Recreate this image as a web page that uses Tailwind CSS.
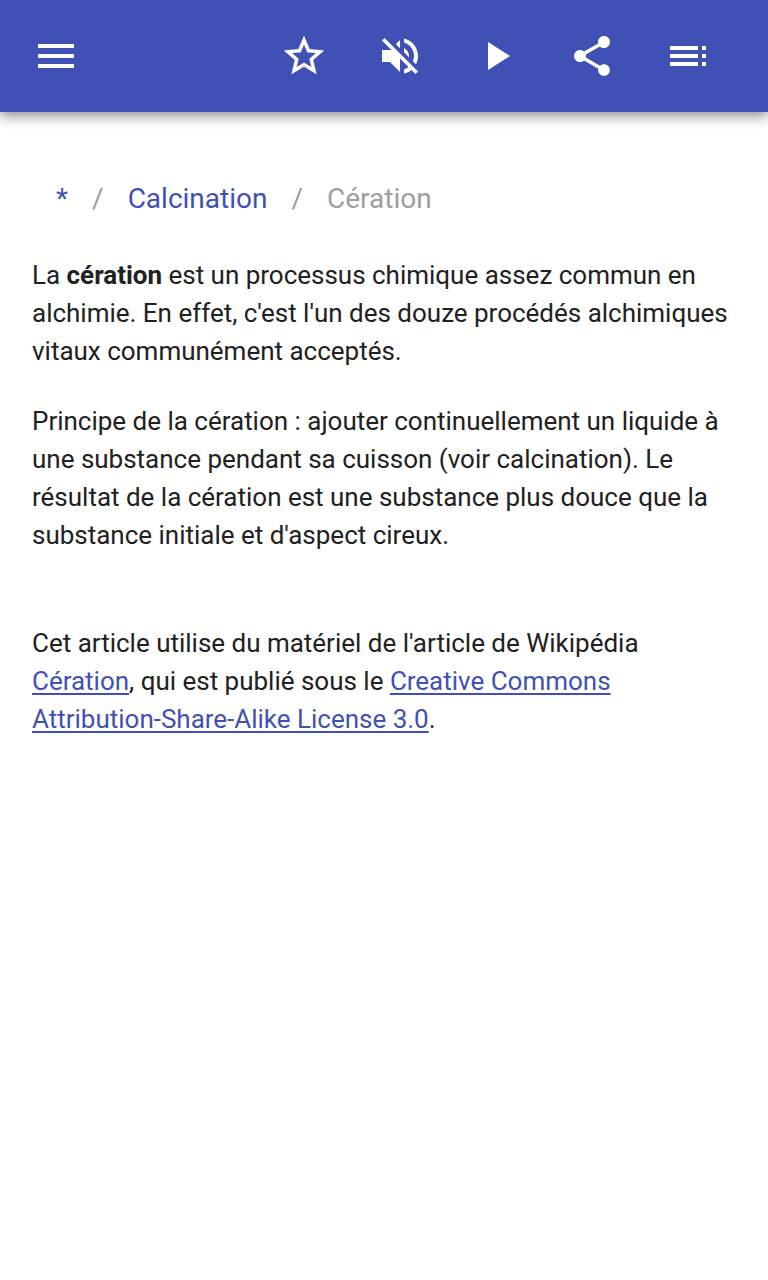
<!DOCTYPE html>
<html lang="fr">
<head>
  <meta charset="utf-8">
  <meta name="viewport" content="width=device-width, initial-scale=1">
  <title>Cération</title>
  <script src="https://cdn.jsdelivr.net/npm/@tailwindcss/browser@4"></script>
</head>
<body class="min-h-screen bg-white font-['Roboto',sans-serif] text-[26px] leading-[38px] tracking-[-0.01px] text-[#212121] antialiased">

  <!-- app bar -->
  <header class="flex h-28 items-center justify-between bg-[#3f51b5] pl-8 pr-14 text-white shadow-[0_4px_12px_rgba(0,0,0,0.45)]">
    <button aria-label="Menu">
      <svg class="size-12" viewBox="0 0 24 24" fill="currentColor"><path d="M3 18h18v-2H3v2zm0-5h18v-2H3v2zm0-7v2h18V6H3z"/></svg>
    </button>
    <div class="flex gap-12">
      <button aria-label="Favori">
        <svg class="size-12" viewBox="0 0 24 24" fill="currentColor" stroke="currentColor" stroke-width=".15"><path d="M22 9.24l-7.19-.62L12 2 9.19 8.63 2 9.24l5.46 4.73L5.82 21 12 17.27 18.18 21l-1.63-7.03L22 9.24zM12 15.4l-3.76 2.27 1-4.28-3.32-2.88 4.38-.38L12 6.1l1.71 4.04 4.38.38-3.32 2.88 1 4.28L12 15.4z"/></svg>
      </button>
      <button aria-label="Son">
        <svg class="size-12" viewBox="0 0 24 24" fill="currentColor"><path d="M16.5 12c0-1.77-1.02-3.29-2.5-4.03v2.21l2.45 2.45c.03-.2.05-.41.05-.63zm2.5 0c0 .94-.2 1.82-.54 2.64l1.51 1.51C20.63 14.91 21 13.5 21 12c0-4.28-2.99-7.86-7-8.77v2.06c2.89.86 5 3.54 5 6.71zM4.27 3L3 4.27 7.73 9H3v6h4l5 5v-6.73l4.25 4.25c-.67.52-1.42.93-2.25 1.18v2.06c1.38-.31 2.63-.95 3.69-1.81L19.73 21 21 19.73l-9-9L4.27 3zM12 4L9.91 6.09 12 8.18V4z"/></svg>
      </button>
      <button aria-label="Lecture">
        <svg class="size-12" viewBox="0 0 24 24" fill="currentColor"><path d="M8 5v14l11-7z"/></svg>
      </button>
      <button aria-label="Partager">
        <svg class="size-12" viewBox="0 0 24 24" fill="currentColor"><path d="M18 16.08c-.76 0-1.44.3-1.96.77L8.91 12.7c.05-.23.09-.46.09-.7s-.04-.47-.09-.7l7.05-4.11c.54.5 1.25.81 2.04.81 1.66 0 3-1.34 3-3s-1.34-3-3-3-3 1.34-3 3c0 .24.04.47.09.7L8.04 9.81C7.5 9.31 6.79 9 6 9c-1.66 0-3 1.34-3 3s1.34 3 3 3c.79 0 1.5-.31 2.04-.81l7.12 4.16c-.05.21-.08.43-.08.65 0 1.61 1.31 2.92 2.92 2.92s2.92-1.31 2.92-2.92-1.31-2.92-2.92-2.92z"/></svg>
      </button>
      <button aria-label="Sommaire">
        <svg class="size-12" viewBox="0 0 24 24" fill="currentColor"><path d="M3 9h14V7H3v2zm0 4h14v-2H3v2zm0 4h14v-2H3v2zm16 0h2v-2h-2v2zm0-10v2h2V7h-2zm0 6h2v-2h-2v2z"/></svg>
      </button>
    </div>
  </header>

  <main class="px-8 pt-[67px]">
    <!-- breadcrumb -->
    <nav class="flex gap-6 px-6 text-[28px] leading-10 tracking-normal text-[#9e9e9e]">
      <a href="#" class="text-[#3f51b5]">*</a>
      <span>/</span>
      <a href="#" class="text-[#3f51b5]">Calcination</a>
      <span>/</span>
      <span>Cération</span>
    </nav>

    <p class="mt-[37px]">La <b>cération</b> est un processus chimique assez commun en alchimie. En effet, c'est l'un des douze procédés alchimiques vitaux communément acceptés.</p>
    <p class="mt-8">Principe de la cération : ajouter continuellement un liquide à une substance pendant sa cuisson (voir calcination). Le résultat de la cération est une substance plus douce que la substance initiale et d'aspect cireux.</p>
    <p class="mt-[70px]">Cet article utilise du matériel de l'article de Wikipédia <a href="#" class="text-[#3f51b5] underline decoration-2 underline-offset-3">Cération</a>, qui est publié sous le <a href="#" class="text-[#3f51b5] underline decoration-2 underline-offset-3">Creative Commons Attribution-Share-Alike License 3.0</a>.</p>
  </main>

</body>
</html>
